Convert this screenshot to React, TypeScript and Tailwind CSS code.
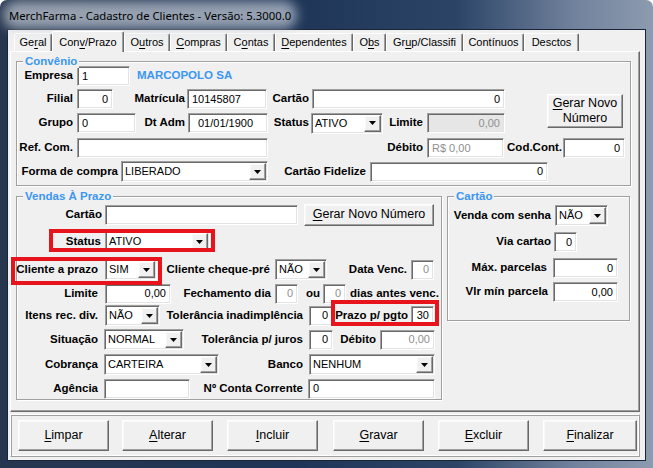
import React from 'react';

const SUNKEN =
  'border border-t-[#a0a0a0] border-l-[#a0a0a0] border-r-white border-b-white shadow-[inset_1px_1px_0_#696969,inset_-1px_-1px_0_#e3e3e3]';
const RAISED =
  'border border-t-white border-l-white border-r-[#696969] border-b-[#696969] shadow-[inset_-1px_-1px_0_#a0a0a0,inset_1px_1px_0_#f8f8f8]';

type EditProps = { className?: string; value?: string; right?: boolean; gray?: boolean; disabled?: boolean };

const Edit = ({ className = '', value = '', right, gray, disabled }: EditProps) => (
  <div
    className={`${SUNKEN} h-[20px] shrink-0 flex items-center px-[4px] text-[11px] leading-none whitespace-nowrap overflow-hidden ${
      right ? 'justify-end' : ''
    } ${gray ? 'text-[#8f8f8f]' : 'text-black'} ${disabled ? 'bg-[#e6e6e6]' : 'bg-white'} ${className}`}
  >
    {value}
  </div>
);

const Combo = ({ className = '', value = '' }: { className?: string; value?: string }) => (
  <div className={`${SUNKEN} h-[21px] shrink-0 flex items-stretch bg-white p-[1px] ${className}`}>
    <div className="flex-1 flex items-center pl-[2px] text-[11px] leading-none whitespace-nowrap overflow-hidden">{value}</div>
    <div className={`${RAISED} w-[17px] bg-[#f0f0f0] flex items-center justify-center`}>
      <svg width="7" height="4" viewBox="0 0 7 4">
        <path d="M0 0h7L3.5 4z" fill="#000" />
      </svg>
    </div>
  </div>
);

const Lbl = ({ className = '', children }: { className?: string; children: React.ReactNode }) => (
  <div className={`shrink-0 flex justify-end whitespace-nowrap font-bold text-[11.5px] leading-none ${className}`}>{children}</div>
);

const Group = ({ title, className = '', children }: { title: string; className?: string; children?: React.ReactNode }) => (
  <div className={`relative shrink-0 border border-[#a0a0a0] shadow-[inset_1px_1px_0_#fff,1px_1px_0_#fff] ${className}`}>
    <div className="absolute left-[6px] top-[-7px] px-[2px] bg-[#f0f0f0] text-[#3b97f3] font-bold text-[11.5px] leading-[13px] whitespace-nowrap">
      {title}
    </div>
    {children}
  </div>
);

const Acc = ({ text, u }: { text: string; u: number }) =>
  u < 0 ? (
    <>{text}</>
  ) : (
    <>
      {text.slice(0, u)}
      <span className="underline underline-offset-[2px]">{text[u]}</span>
      {text.slice(u + 1)}
    </>
  );

const tabs = [
  { label: 'Geral', u: 2, w: 'w-[38px]' },
  { label: 'Conv/Prazo', u: 3, w: 'w-[72px]', active: true },
  { label: 'Outros', u: 1, w: 'w-[46px]' },
  { label: 'Compras', u: 0, w: 'w-[57px]' },
  { label: 'Contas', u: 1, w: 'w-[48px]' },
  { label: 'Dependentes', u: 0, w: 'w-[78px]' },
  { label: 'Obs', u: 1, w: 'w-[33px]' },
  { label: 'Grup/Classifi', u: 2, w: 'w-[77px]' },
  { label: 'Contínuos', u: -1, w: 'w-[61px]' },
  { label: 'Desctos', u: -1, w: 'w-[55px]' },
];

const buttons = [
  { label: 'Limpar', ml: 'ml-[7px]', w: 'w-[91px]' },
  { label: 'Alterar', ml: 'ml-[13px]', w: 'w-[91px]' },
  { label: 'Incluir', ml: 'ml-[14px]', w: 'w-[91px]' },
  { label: 'Gravar', ml: 'ml-[15px]', w: 'w-[91px]' },
  { label: 'Excluir', ml: 'ml-[14px]', w: 'w-[91px]' },
  { label: 'Finalizar', ml: 'ml-[14px]', w: 'w-[94px]' },
];

export default function App() {
  return (
    <div className="relative w-[653px] h-[468px] overflow-hidden rounded-t-[7px] bg-[linear-gradient(90deg,#26364f_0%,#1e3557_45%,#2c4567_70%,#71829c_88%,#8d9bb0_100%)] font-['Liberation_Sans',Arial,sans-serif] text-black">
      {/* Title bar */}
      <div className="h-[30px] flex items-center pl-[9px]">
        <span className="relative">
          <span className="absolute -inset-x-[6px] -inset-y-[2px] rounded-full bg-[#c9d0da] opacity-70 blur-[6px]" />
          <span className="relative font-['Noto_Sans',sans-serif] text-[11.3px] text-black">
            MerchFarma - Cadastro de Clientes - Versão: 5.3000.0
          </span>
        </span>
      </div>

      {/* Client area */}
      <div className="mx-[8px] w-[637px] h-[430px] bg-[#f0f0f0] shadow-[0_0_0_1px_#1b2538]">
        {/* Tabs */}
        <div className="h-[21px] flex items-end pl-[6px]">
          {tabs.map(t => (
            <div
              key={t.label}
              className={`${t.w} shrink-0 flex items-center justify-center text-[11px] leading-none whitespace-nowrap border-t border-l border-white border-r border-r-[#696969] shadow-[inset_-1px_0_0_#a0a0a0] rounded-t-[2px] bg-[#f0f0f0] ${
                t.active ? 'h-[21px] relative top-[1px] z-10' : 'h-[18px]'
              }`}
            >
              <Acc text={t.label} u={t.u} />
            </div>
          ))}
        </div>

        {/* Tab page */}
        <div className="ml-[2px] w-[630px] h-[361px] border border-t-white border-l-white border-r-[#696969] border-b-[#696969] shadow-[inset_-1px_-1px_0_#a0a0a0] pl-[5px] pt-[9px]">
          <Group title="Convênio" className="w-[615px] pb-[3px]">
            {/* Row 1 */}
            <div className="mt-[4px] h-[20px] flex items-center">
              <Lbl className="w-[56px]">Empresa</Lbl>
              <Edit className="ml-[4px] w-[53px]" value="1" />
              <div className="ml-[7px] font-bold text-[11.5px] text-[#3b97f3] whitespace-nowrap">MARCOPOLO SA</div>
            </div>

            {/* Rows 2-3 with button */}
            <div className="mt-[3px] flex items-center">
              <div className="flex flex-col">
                <div className="h-[20px] flex items-center">
                  <Lbl className="w-[56px]">Filial</Lbl>
                  <Edit className="ml-[4px] w-[36px]" value="0" right />
                  <Lbl className="w-[72px]">Matrícula</Lbl>
                  <Edit className="ml-[2px] w-[80px]" value="10145807" />
                  <Lbl className="w-[42px]">Cartão</Lbl>
                  <Edit className="ml-[3px] w-[193px]" value="0" right />
                </div>
                <div className="mt-[4px] h-[20px] flex items-center">
                  <Lbl className="w-[56px]">Grupo</Lbl>
                  <Edit className="ml-[4px] w-[59px]" value="0" />
                  <Lbl className="w-[49px]">Dt Adm</Lbl>
                  <Edit className="ml-[3px] w-[80px] pl-[9px]" value="01/01/1900" />
                  <Lbl className="w-[41px]">Status</Lbl>
                  <Combo className="ml-[2px] w-[72px]" value="ATIVO" />
                  <Lbl className="w-[40px]">Limite</Lbl>
                  <Edit className="ml-[4px] w-[78px]" value="0,00" right gray disabled />
                </div>
              </div>
              <div
                className={`${RAISED} ml-[42px] w-[76px] h-[34px] bg-[#f0f0f0] flex flex-col items-center justify-center text-[12.5px] leading-[15px]`}
              >
                <span>
                  <Acc text="Gerar Novo" u={0} />
                </span>
                <span>Número</span>
              </div>
            </div>

            {/* Row 4 */}
            <div className="mt-[5px] h-[20px] flex items-center">
              <Lbl className="w-[56px]">Ref. Com.</Lbl>
              <Edit className="ml-[4px] w-[191px]" />
              <Lbl className="w-[155px]">Débito</Lbl>
              <Edit className="ml-[4px] w-[77px]" value="R$ 0,00" gray />
              <Lbl className="w-[58px]">Cod.Cont.</Lbl>
              <Edit className="ml-[1px] w-[62px]" value="0" right />
            </div>

            {/* Row 5 */}
            <div className="mt-[3px] h-[21px] flex items-center">
              <Lbl className="w-[101px]">Forma de compra</Lbl>
              <Combo className="ml-[3px] w-[147px]" value="LIBERADO" />
              <Lbl className="w-[98px]">Cartão Fidelize</Lbl>
              <Edit className="ml-[4px] w-[178px]" value="0" right />
            </div>
          </Group>

          <div className="mt-[10px] flex items-start">
            <Group title="Vendas À Prazo" className="w-[426px] h-[204px]">
              <div className="mt-[7px] h-[21px] flex items-center">
                <Lbl className="w-[85px]">Cartão</Lbl>
                <Edit className="ml-[3px] w-[193px]" />
                <div
                  className={`${RAISED} ml-[6px] w-[130px] h-[22px] shrink-0 bg-[#f0f0f0] flex items-center justify-center text-[12.5px] leading-none whitespace-nowrap`}
                >
                  <Acc text="Gerar Novo Número" u={0} />
                </div>
              </div>
              <div className="mt-[6px] h-[21px] flex items-center">
                <Lbl className="w-[84px]">Status</Lbl>
                <Combo className="ml-[4px] w-[105px]" value="ATIVO" />
              </div>
              <div className="mt-[7px] h-[21px] flex items-center">
                <Lbl className="w-[81px]">Cliente a prazo</Lbl>
                <Combo className="ml-[7px] w-[52px]" value="SIM" />
                <Lbl className="w-[113px]">Cliente cheque-pré</Lbl>
                <Combo className="ml-[5px] w-[52px]" value="NÃO" />
                <Lbl className="w-[80px]">Data Venc.</Lbl>
                <Edit className="ml-[4px] w-[23px]" value="0" right gray />
              </div>
              <div className="mt-[3px] h-[21px] flex items-center">
                <Lbl className="w-[81px]">Limite</Lbl>
                <Edit className="ml-[7px] w-[66px]" value="0,00" right />
                <Lbl className="w-[100px]">Fechamento dia</Lbl>
                <Edit className="ml-[4px] w-[23px]" value="0" right gray />
                <Lbl className="w-[22px]">ou</Lbl>
                <Edit className="ml-[3px] w-[23px]" value="0" right gray />
                <Lbl className="ml-[4px]">dias antes venc.</Lbl>
              </div>
              <div className="mt-[1px] h-[21px] flex items-center">
                <Lbl className="w-[81px]">Itens rec. div.</Lbl>
                <Combo className="ml-[7px] w-[55px]" value="NÃO" />
                <Lbl className="w-[143px]">Tolerância inadimplência</Lbl>
                <Edit className="ml-[6px] w-[24px]" value="0" right />
                <Lbl className="w-[75px]">Prazo p/ pgto</Lbl>
                <Edit className="ml-[3px] w-[23px]" value="30" right />
              </div>
              <div className="mt-[3px] h-[21px] flex items-center">
                <Lbl className="w-[81px]">Situação</Lbl>
                <Combo className="ml-[6px] w-[80px]" value="NORMAL" />
                <Lbl className="w-[119px]">Tolerância p/ juros</Lbl>
                <Edit className="ml-[6px] w-[24px]" value="0" right />
                <Lbl className="w-[43px]">Débito</Lbl>
                <Edit className="ml-[4px] w-[55px]" value="0,00" right gray />
              </div>
              <div className="mt-[4px] h-[21px] flex items-center">
                <Lbl className="w-[81px]">Cobrança</Lbl>
                <Combo className="ml-[6px] w-[115px]" value="CARTEIRA" />
                <Lbl className="w-[84px]">Banco</Lbl>
                <Combo className="ml-[6px] w-[126px]" value="NENHUM" />
              </div>
              <div className="mt-[3px] h-[21px] flex items-center">
                <Lbl className="w-[81px]">Agência</Lbl>
                <Edit className="ml-[6px] w-[86px]" />
                <Lbl className="w-[113px]">Nº Conta Corrente</Lbl>
                <Edit className="ml-[5px] w-[127px]" value="0" />
              </div>
            </Group>

            <Group title="Cartão" className="ml-[5px] w-[183px] h-[125px]">
              <div className="mt-[8px] h-[21px] flex items-center">
                <Lbl className="w-[103px]">Venda com senha</Lbl>
                <Combo className="ml-[4px] w-[53px]" value="NÃO" />
              </div>
              <div className="mt-[6px] h-[20px] flex items-center">
                <Lbl className="w-[103px]">Via cartao</Lbl>
                <Edit className="ml-[3px] w-[23px]" value="0" right />
              </div>
              <div className="mt-[6px] h-[20px] flex items-center">
                <Lbl className="w-[99px]">Máx. parcelas</Lbl>
                <Edit className="ml-[6px] w-[65px]" value="0" right />
              </div>
              <div className="mt-[4px] h-[20px] flex items-center">
                <Lbl className="w-[100px]">Vlr mín parcela</Lbl>
                <Edit className="ml-[5px] w-[65px]" value="0,00" right />
              </div>
            </Group>
          </div>
        </div>

        {/* Button panel */}
        <div className="mt-[2px] ml-[2px] w-[630px] h-[43px] border border-t-white border-l-white border-r-[#a0a0a0] border-b-[#a0a0a0] shadow-[inset_1px_1px_0_#a0a0a0,inset_-1px_-1px_0_#fff] flex items-center">
          {buttons.map(b => (
            <div
              key={b.label}
              className={`${RAISED} ${b.ml} ${b.w} h-[31px] shrink-0 bg-[#f0f0f0] flex items-center justify-center text-[12.5px] leading-none`}
            >
              <Acc text={b.label} u={0} />
            </div>
          ))}
        </div>
      </div>

      {/* Highlight marks */}
      <div className="absolute left-[49px] top-[229px] w-[166px] h-[23px] border-4 border-[#e8141c] pointer-events-none" />
      <div className="absolute left-[11px] top-[257px] w-[151px] h-[28px] border-4 border-[#e8141c] pointer-events-none" />
      <div className="absolute left-[331px] top-[300px] w-[108px] h-[26px] border-4 border-[#e8141c] pointer-events-none" />
    </div>
  );
}
